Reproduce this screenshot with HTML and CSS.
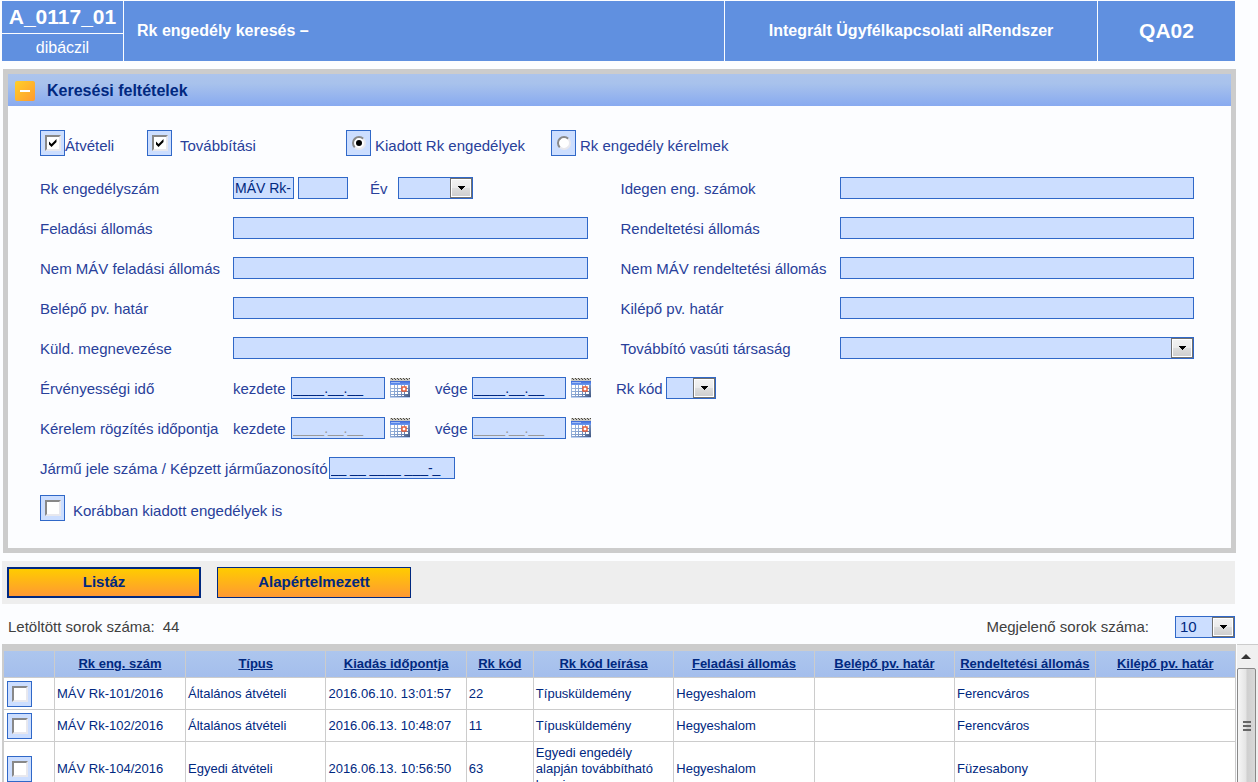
FILE: index.html
```html
<!DOCTYPE html>
<html lang="hu">
<head>
<meta charset="utf-8">
<title>Rk engedély keresés</title>
<link rel="stylesheet" href="styles.css">
</head>
<body>
<svg class="defs" width="0" height="0" aria-hidden="true">
  <defs>
    <linearGradient id="calHead" x1="0" y1="0" x2="0" y2="1"><stop offset="0" stop-color="#3a68d8"/><stop offset="1" stop-color="#6f9bf0"/></linearGradient>
    <linearGradient id="calBody" x1="0" y1="0" x2="1" y2="1"><stop offset="0" stop-color="#b4cbee"/><stop offset=".6" stop-color="#7f9cca"/><stop offset="1" stop-color="#3c5078"/></linearGradient>
    <linearGradient id="btnFace" x1="0" y1="0" x2="0" y2="1"><stop offset="0" stop-color="#f2f2f2"/><stop offset=".48" stop-color="#ebebeb"/><stop offset=".52" stop-color="#dddddd"/><stop offset="1" stop-color="#cfcfcf"/></linearGradient>
  </defs>
  <symbol id="calendar" viewBox="0 0 20 20">
    <rect width="20" height="20" fill="url(#calBody)"/>
    <rect y="3" width="20" height="4" fill="url(#calHead)"/>
    <rect x="1" y="4" width="9" height="1" fill="#9fbcf6"/>
    <rect width="20" height="3" fill="#c9c8c2"/>
    <path d="M1 0h1v1h-1zM4 0h1v1h-1zM7 0h1v1h-1zM10 0h1v1h-1zM13 0h1v1h-1zM16 0h1v1h-1zM19 0h1v1h-1zM2 1h1v1h-1zM5 1h1v1h-1zM8 1h1v1h-1zM11 1h1v1h-1zM14 1h1v1h-1zM17 1h1v1h-1z" fill="#4a4842"/>
    <path d="M1 7h3v3h-3zM5 7h2v3h-2zM8 7h3v3h-3zM12 7h2v3h-2zM15 7h3v3h-3zM1 11h3v2h-3zM5 11h2v2h-2zM8 11h3v2h-3zM15 11h3v2h-3zM1 14h3v2h-3zM5 14h2v2h-2zM8 14h3v2h-3zM12 14h2v2h-2zM15 14h3v2h-3zM1 17h3v1h-3zM5 17h2v1h-2zM8 17h3v1h-3zM12 17h2v1h-2z" fill="#fff"/>
    <rect x="12" y="9" width="4" height="4" fill="#fff" stroke="#e8582e" stroke-width="1.4"/>
    <rect y="19" width="20" height="1" fill="#b9cdf0"/>
  </symbol>
  <symbol id="drop" viewBox="0 0 22 20">
    <rect x=".5" y=".5" width="21" height="19" fill="#fff" stroke="#707070"/>
    <rect x="2" y="2" width="18" height="16" fill="url(#btnFace)"/>
    <path d="M8 8h7v1h-1v1h-1v1h-1v1h-1v-1h-1v-1h-1v-1h-1z" fill="#000"/>
  </symbol>
</svg>

<header class="top">
  <div class="ident"><strong class="code">A_0117_01</strong><span class="user">dibáczil</span></div>
  <h1 class="title">Rk engedély keresés –</h1>
  <div class="system">Integrált Ügyfélkapcsolati alRendszer</div>
  <div class="env">QA02</div>
</header>

<main class="page">
  <section class="panel">
    <header class="panel-head">
      <button class="toggle" type="button" aria-label="Összecsukás"><svg viewBox="0 0 20 20" width="20" height="20"><path d="M5 10h10" stroke="#fff" stroke-width="2"/></svg></button>
      <h2>Keresési feltételek</h2>
    </header>
    <form class="form" id="search">
      <div class="checks">
        <label class="option"><span class="box"><input type="checkbox" checked></span>Átvételi</label>
        <label class="option wide"><span class="box"><input type="checkbox" checked></span>Továbbítási</label>
        <label class="option near"><span class="box"><input type="radio" name="kind" checked></span>Kiadott Rk engedélyek</label>
        <label class="option near"><span class="box"><input type="radio" name="kind"></span>Rk engedély kérelmek</label>
      </div>

      <div class="fields">
        <label for="num">Rk engedélyszám</label>
        <div class="line">
          <input class="prefix" type="text" value="MÁV Rk-" aria-label="Előtag" readonly>
          <input class="num" id="num" type="text">
          <label class="year" for="year">Év</label>
          <span class="select year-select"><select id="year"><option></option></select><svg><use href="#drop"/></svg></span>
        </div>
        <label class="second" for="foreign">Idegen eng. számok</label>
        <input id="foreign" type="text">

        <label for="from">Feladási állomás</label>
        <input id="from" type="text">
        <label class="second" for="to">Rendeltetési állomás</label>
        <input id="to" type="text">

        <label for="nfrom">Nem MÁV feladási állomás</label>
        <input id="nfrom" type="text">
        <label class="second" for="nto">Nem MÁV rendeltetési állomás</label>
        <input id="nto" type="text">

        <label for="in">Belépő pv. határ</label>
        <input id="in" type="text">
        <label class="second" for="out">Kilépő pv. határ</label>
        <input id="out" type="text">

        <label for="sender">Küld. megnevezése</label>
        <input id="sender" type="text">
        <label class="second" for="carrier">Továbbító vasúti társaság</label>
        <span class="select"><select id="carrier"><option></option></select><svg><use href="#drop"/></svg></span>
      </div>

      <div class="line">
        <span class="lead">Érvényességi idő</span>
        <label class="start" for="v1">kezdete</label>
        <input class="date" id="v1" type="text" value="____.__.__">
        <button class="cal" type="button" aria-label="Naptár"><svg><use href="#calendar"/></svg></button>
        <label class="end" for="v2">vége</label>
        <input class="date" id="v2" type="text" value="____.__.__">
        <button class="cal" type="button" aria-label="Naptár"><svg><use href="#calendar"/></svg></button>
        <label class="rk" for="rk">Rk kód</label>
        <span class="select rk-select"><select id="rk"><option></option></select><svg><use href="#drop"/></svg></span>
      </div>

      <div class="line">
        <span class="lead">Kérelem rögzítés időpontja</span>
        <label class="start" for="k1">kezdete</label>
        <input class="date" id="k1" type="text" value="____.__.__" disabled>
        <button class="cal" type="button" aria-label="Naptár"><svg><use href="#calendar"/></svg></button>
        <label class="end" for="k2">vége</label>
        <input class="date" id="k2" type="text" value="____.__.__" disabled>
        <button class="cal" type="button" aria-label="Naptár"><svg><use href="#calendar"/></svg></button>
      </div>

      <div class="line">
        <label class="vehicle-label" for="vehicle">Jármű jele száma / Képzett járműazonosító</label>
        <input class="vehicle" id="vehicle" type="text" value="__ __ ____ ___-_">
      </div>

      <label class="option wide last"><span class="box"><input type="checkbox"></span>Korábban kiadott engedélyek is</label>
    </form>
  </section>

  <div class="actions">
    <button class="action primary" type="submit" form="search">Listáz</button>
    <button class="action" type="reset" form="search">Alapértelmezett</button>
  </div>

  <div class="counts">
    <span>Letöltött sorok száma:</span><span class="total">44</span>
    <label class="size-label" for="size">Megjelenő sorok száma:</label>
    <span class="select size-select"><select id="size"><option>10</option></select><svg><use href="#drop"/></svg></span>
  </div>
</main>

<section class="results">
  <div class="grid">
    <table>
      <colgroup><col class="c-check"><col class="c-num"><col><col><col class="c-code"><col><col><col><col><col></colgroup>
      <thead>
        <tr><th></th><th><a href="#">Rk eng. szám</a></th><th><a href="#">Típus</a></th><th><a href="#">Kiadás időpontja</a></th><th><a href="#">Rk kód</a></th><th><a href="#">Rk kód leírása</a></th><th><a href="#">Feladási állomás</a></th><th><a href="#">Belépő pv. határ</a></th><th><a href="#">Rendeltetési állomás</a></th><th><a href="#">Kilépő pv. határ</a></th></tr>
      </thead>
      <tbody>
        <tr><td class="pick"><span class="box"><input type="checkbox" aria-label="MÁV Rk-101/2016"></span></td><td>MÁV Rk-101/2016</td><td>Általános átvételi</td><td>2016.06.10. 13:01:57</td><td>22</td><td>Típusküldemény</td><td>Hegyeshalom</td><td></td><td>Ferencváros</td><td></td></tr>
        <tr><td class="pick"><span class="box"><input type="checkbox" aria-label="MÁV Rk-102/2016"></span></td><td>MÁV Rk-102/2016</td><td>Általános átvételi</td><td>2016.06.13. 10:48:07</td><td>11</td><td>Típusküldemény</td><td>Hegyeshalom</td><td></td><td>Ferencváros</td><td></td></tr>
        <tr><td class="pick"><span class="box"><input type="checkbox" aria-label="MÁV Rk-104/2016"></span></td><td>MÁV Rk-104/2016</td><td>Egyedi átvételi</td><td>2016.06.13. 10:56:50</td><td>63</td><td>Egyedi engedély alapján továbbítható kocsi</td><td>Hegyeshalom</td><td></td><td>Füzesabony</td><td></td></tr>
      </tbody>
    </table>
  </div>
  <div class="scroll" aria-hidden="true">
    <svg class="up" viewBox="0 0 21 23"><path d="M4 14l5-5 5 5z" fill="#333"/></svg>
    <div class="thumb"><svg viewBox="0 0 8 10" width="8" height="10"><path d="M0 1h8M0 5h8M0 9h8" stroke="#666" stroke-width="2"/></svg></div>
  </div>
</section>
</body>
</html>
```
FILE: styles.css
```css
* { box-sizing: border-box; }

body {
  margin: 0;
  height: 100vh;
  overflow: hidden;
  display: flex;
  flex-direction: column;
  background: #fcfdff;
  color: #28409a;
  font: 15px/18px "Liberation Sans", Arial, sans-serif;
}

h1, h2 { margin: 0; font-size: 16px; line-height: 20px; }
.defs { position: absolute; }
input, select, button { font: inherit; margin: 0; }

/* Title bar */
.top {
  display: grid;
  grid-template-columns: 121px 600fr 372fr 137fr;
  gap: 1px;
  height: 60px;
  margin: 1px 23px 0 2px;
  flex: none;
  color: #fff;
}
.top > * { background: #6090e0; display: flex; align-items: center; }
.top .ident { display: grid; grid-template-rows: 32px 27px; gap: 1px; background: none; text-align: center; }
.code, .user { background: #6090e0; font-size: 16px; line-height: 27px; }
.code { font-size: 21px; line-height: 32px; }
.title { padding-left: 13px; }
.system, .env { justify-content: center; font-weight: bold; font-size: 16px; }
.env { font-size: 21px; }

.page { flex: none; padding: 8px 22px 0 2px; }

/* Search panel */
.panel { border: 5px solid #ccc; margin-left: 1px; }
.panel-head {
  display: flex;
  align-items: center;
  gap: 12px;
  height: 32px;
  padding: 2px 0 0 7px;
  background: linear-gradient(#adc4ec, #a8c2ec 30%, #88aaf0);
  color: #002880;
}
.toggle {
  display: flex;
  width: 20px;
  height: 20px;
  padding: 0;
  border: 0;
  border-radius: 2px;
  background: linear-gradient(135deg, #ffd028, #ff9a30);
}
.form { display: flex; flex-direction: column; gap: 18px; padding: 24px 37px 27px 32px; }
.checks { display: grid; grid-template-columns: 107px 199px 205px auto; margin-bottom: 3px; }
.option { display: flex; align-items: flex-end; height: 26px; line-height: 20px; }
.option.near { gap: 4px; }
.option.wide { gap: 8px; }
.option.last { margin-top: -2px; }

.box {
  display: flex;
  align-items: center;
  justify-content: center;
  flex: none;
  width: 25px;
  height: 26px;
  border: 1px solid #3068c8;
  background: #ccdeff;
}
.box input {
  appearance: none;
  display: grid;
  place-items: center;
  width: 16px;
  height: 16px;
  border: 2px solid;
  border-color: #888 #e8e8ee #e8e8ee #888;
  background: #fff;
}
.box input[type="radio"] { border-radius: 50%; width: 14px; height: 14px; }
.box input[type="checkbox"]:checked::before {
  content: "";
  width: 8px;
  height: 8px;
  background: #000;
  clip-path: polygon(0 25%, 38% 62%, 100% 0, 100% 38%, 38% 100%, 0 62%);
}
.box input[type="radio"]:checked::before {
  content: "";
  width: 6px;
  height: 6px;
  border-radius: 50%;
  background: #000;
}

.fields {
  display: grid;
  grid-template-columns: 193px 1fr 252px 1fr;
  gap: 18px 0;
  align-items: center;
}
.fields label, .line label, .lead { padding-top: 2px; }
.second { padding-left: 33px; }

input[type="text"], .select {
  width: 100%;
  height: 22px;
  border: 1px solid #3068c8;
  border-radius: 0;
  background: #ccdeff;
  color: #002880;
}
input[type="text"] { padding: 0 1px; font-size: 14px; }
input[type="text"]:disabled { color: #999; }

.select { display: grid; grid-template-columns: 1fr 22px; }
.select select {
  grid-area: 1 / 1 / 2 / 3;
  appearance: none;
  width: 100%;
  height: 20px;
  padding: 0 24px 0 4px;
  border: 0;
  background: none;
  color: #002880;
}
.select svg { grid-area: 1 / 2; width: 22px; height: 20px; pointer-events: none; }

.line { display: flex; align-items: center; height: 22px; }
.line > * { flex: none; }
.line .prefix { width: 61px; }
.line .num { width: 50px; margin-left: 4px; }
.line .year { width: 50px; padding-left: 22px; }
.line .year-select { width: 75px; }
.lead { width: 193px; }
.start { width: 58px; }
.line .end { width: 62px; padding-left: 25px; }
.line .rk { width: 75px; padding-left: 25px; }
.line .rk-select { width: 50px; }
.line .date { width: 94px; }
.cal { display: flex; width: 20px; height: 20px; margin-left: 5px; padding: 0; border: 0; background: none; }
.cal svg { width: 20px; height: 20px; }
.vehicle-label { padding-right: 1px; white-space: nowrap; }
.line .vehicle { width: 126px; }

/* Buttons and counters */
.actions {
  display: flex;
  gap: 16px;
  margin: 8px 1px 0 0;
  padding: 6px 5px;
  background: #eee;
}
.action {
  width: 194px;
  height: 31px;
  border: 1px solid #002880;
  padding: 0 0 2px;
  background: linear-gradient(#ffcc00, #ff9933);
  color: #002880;
  font-weight: bold;
}
.action.primary { border-width: 2px; }
.counts {
  display: flex;
  align-items: center;
  margin: 12px 1px 0 0;
  padding-left: 6px;
  padding-bottom: 6px;
  color: #404040;
}
.total { margin-left: 8px; }
.size-label { margin-left: auto; margin-right: 26px; }
.counts .size-select { width: 60px; }

/* Result list */
.results { flex: 1; min-height: 0; display: flex; padding-left: 2px; }
.grid { flex: 1; overflow: hidden; border-top: 7px solid #ccc; border-left: 2px solid #ccc; }
table { width: 100%; table-layout: fixed; border-collapse: separate; border-spacing: 0; background: #fff; }
.c-check { width: 51px; }
.c-num { width: 131px; }
.c-code { width: 67px; }
th, td {
  border: solid #ccc;
  border-width: 0 1px 1px 0;
  color: #002880;
  font-size: 13px;
  line-height: 16px;
}
th { height: 27px; padding: 0; background: linear-gradient(#adc6ee, #a4beec); white-space: nowrap; }
th a { color: inherit; }
td { height: 32px; padding: 3px 2px 2px; text-align: left; }
td.pick { padding-left: 3px; }

.scroll { display: flex; flex-direction: column; flex: none; width: 21px; margin-left: 1px; border-top: 1px solid #ccc; background: #f0f0f0; }
.up { flex: none; width: 21px; height: 23px; }
.thumb {
  flex: none;
  height: 116px;
  margin-right: 2px;
  display: flex;
  align-items: center;
  justify-content: center;
  border: 1px solid #888;
  border-radius: 2px;
  background: linear-gradient(90deg, #f6f6f6, #e4e4e4 48%, #cfcfcf 52%, #d8d8d8);
}
```
